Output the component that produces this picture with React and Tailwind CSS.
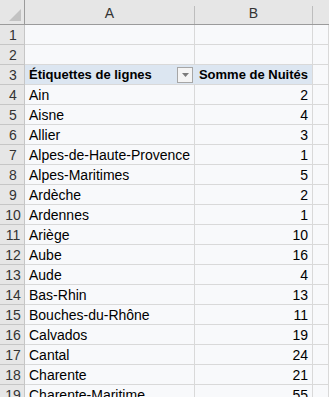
const ROWS = [
  ['Ain', 2],
  ['Aisne', 4],
  ['Allier', 3],
  ['Alpes-de-Haute-Provence', 1],
  ['Alpes-Maritimes', 5],
  ['Ardèche', 2],
  ['Ardennes', 1],
  ['Ariège', 10],
  ['Aube', 16],
  ['Aude', 4],
  ['Bas-Rhin', 13],
  ['Bouches-du-Rhône', 11],
  ['Calvados', 19],
  ['Cantal', 24],
  ['Charente', 21],
  ['Charente-Maritime', 55],
]

const cell = 'h-5 border-r border-b border-[#d9d9d9] bg-[#f8f9fb] leading-[20px] px-[4px] whitespace-nowrap overflow-hidden'
const rowHead = 'h-5 border-r border-b border-[#c6c6c6] bg-[#e6e6e6] text-center leading-[20px] text-[#333] pl-[2px]'

function FilterButton() {
  return (
    <span className="w-4 h-4 border border-[#a6a6a6] bg-[#f4f4f4] flex items-center justify-center shrink-0">
      <svg width="7" height="4" viewBox="0 0 7 4">
        <path d="M0 0h7L3.5 4z" fill="#7a7a7a" />
      </svg>
    </span>
  )
}

export default function App() {
  return (
    <div className="w-[329px] h-[397px] overflow-hidden bg-[#f8f9fb] text-[14px] text-black" style={{ fontFamily: '"Liberation Sans", Arial, sans-serif' }}>
      <div className="grid grid-cols-[25px_170px_118px_16px]">
        {/* column headers */}
        <div className="h-[25px] bg-[#e6e6e6] border-r border-b border-[#9b9b9b] flex items-end justify-end p-[3px]">
          <svg width="12" height="12" viewBox="0 0 12 12">
            <path d="M12 0V12H0z" fill="#c2c2c2" />
          </svg>
        </div>
        <div className="h-[25px] bg-[#e6e6e6] border-b border-[#9b9b9b] flex">
          <div className="flex-1 text-center leading-[26px] text-[#333]">A</div>
          <div className="w-px mt-[6px] bg-[#bdbdbd]" />
        </div>
        <div className="h-[25px] bg-[#e6e6e6] border-b border-[#9b9b9b] flex">
          <div className="flex-1 text-center leading-[26px] text-[#333]">B</div>
          <div className="w-px mt-[6px] bg-[#bdbdbd]" />
        </div>
        <div className="h-[25px] bg-[#e6e6e6] border-b border-[#9b9b9b]" />

        {/* empty rows */}
        {[1, 2].map((n) => (
          <Row key={n} n={n} />
        ))}

        {/* pivot header */}
        <div className={rowHead}>3</div>
        <div className="h-5 border-b border-[#d9d9d9] bg-[#dce6f1] font-bold text-[13px] pl-[4px] pr-[2px] flex items-center justify-between">
          <span className="leading-[19px]">Étiquettes de lignes</span>
          <FilterButton />
        </div>
        <div className="h-5 border-r border-b border-[#d9d9d9] bg-[#dce6f1] font-bold text-[13px] leading-[19px] pl-[2px] pr-[4px] text-right whitespace-nowrap">
          Somme de Nuités
        </div>
        <div className={cell} />

        {ROWS.map(([name, v], i) => (
          <Row key={name} n={i + 4} name={name} value={v} />
        ))}
      </div>
    </div>
  )
}

function Row({ n, name, value }) {
  return (
    <>
      <div className={rowHead}>{n}</div>
      <div className={cell}>{name}</div>
      <div className={cell + ' text-right'}>{value}</div>
      <div className={cell} />
    </>
  )
}
